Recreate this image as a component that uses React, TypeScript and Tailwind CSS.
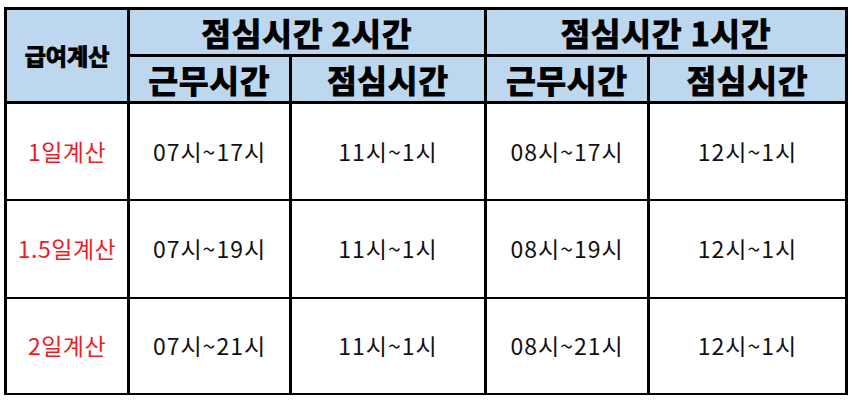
const rows = [
  { label: "1일계산", a: "07시~17시", b: "11시~1시", c: "08시~17시", d: "12시~1시" },
  { label: "1.5일계산", a: "07시~19시", b: "11시~1시", c: "08시~19시", d: "12시~1시" },
  { label: "2일계산", a: "07시~21시", b: "11시~1시", c: "08시~21시", d: "12시~1시" },
];

const heights = ["h-[97px]", "h-[98px]", "h-[96px]"];

export default function App() {
  return (
    <div className="w-[852px] h-[403px] bg-white pl-[4px] pt-[7px]">
      <table
        className="border-collapse table-fixed w-[841px] text-center text-black"
        style={{ fontFamily: '"Noto Sans CJK KR", "Noto Sans", sans-serif' }}
      >
        <colgroup>
          <col className="w-[123px]" />
          <col className="w-[162px]" />
          <col className="w-[195px]" />
          <col className="w-[163px]" />
          <col className="w-[198px]" />
        </colgroup>
        <thead className="bg-[#bdd7ee] font-black [-webkit-text-stroke:1.2px_black]">
          <tr className="h-[47px]">
            <th rowSpan={2} className="border-[3px] border-black text-[23px] leading-none [-webkit-text-stroke:1px_black]">
              급여계산
            </th>
            <th colSpan={2} className="border-[3px] border-black text-[32px] tracking-[1px] leading-none">
              점심시간 2시간
            </th>
            <th colSpan={2} className="border-[3px] border-black text-[32px] tracking-[1px] leading-none">
              점심시간 1시간
            </th>
          </tr>
          <tr className="h-[47px] text-[32px] tracking-[1px] leading-none">
            <th className="border-[3px] border-black">근무시간</th>
            <th className="border-[3px] border-black">점심시간</th>
            <th className="border-[3px] border-black">근무시간</th>
            <th className="border-[3px] border-black">점심시간</th>
          </tr>
        </thead>
        <tbody className="text-[23px] tracking-[1px] text-[#111]">
          {rows.map((r, i) => (
            <tr key={r.label} className={heights[i]}>
              <td className="border-x-[3px] border-y-[2px] border-black text-[#ee1c25] tracking-[0.5px]">{r.label}</td>
              <td className="border-x-[3px] border-y-[2px] border-black">{r.a}</td>
              <td className="border-x-[3px] border-y-[2px] border-black">{r.b}</td>
              <td className="border-x-[3px] border-y-[2px] border-black">{r.c}</td>
              <td className="border-x-[3px] border-y-[2px] border-black">{r.d}</td>
            </tr>
          ))}
        </tbody>
      </table>
    </div>
  );
}
